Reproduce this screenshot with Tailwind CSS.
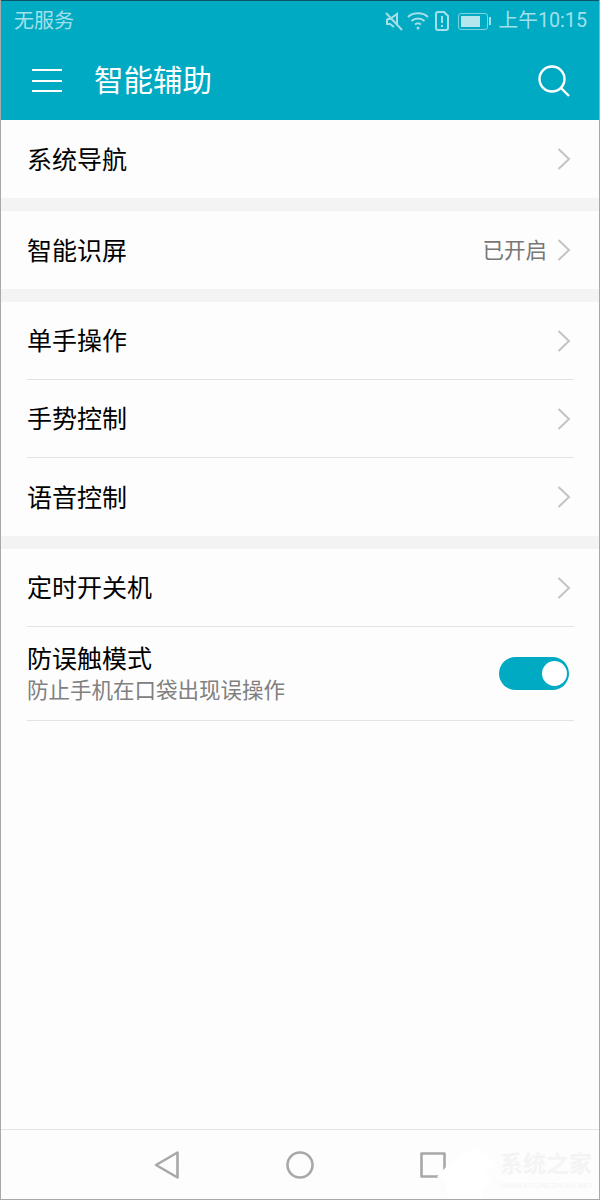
<!DOCTYPE html>
<html lang="zh">
  <head>
    <meta charset="UTF-8" />
    <title>智能辅助</title>
    <script src="https://cdn.jsdelivr.net/npm/@tailwindcss/browser@4"></script>
  </head>
  <body class="bg-[#fdfdfd]">
    <div class="relative flex flex-col w-[600px] h-[1200px] bg-[#fdfdfd] border-x border-b border-[#a8a8a8] font-['Roboto','Noto_Sans_CJK_SC',sans-serif] overflow-hidden">
      <!-- header -->
      <div class="shrink-0 h-[120px] -mx-px bg-[#00aac3] border-t border-[#0b5566] text-white">
        <div class="flex items-center justify-between h-[40px] pl-[14px] pr-[13px] text-[#a3e0ea]">
          <div class="text-[20px] leading-none">无服务</div>
          <div class="flex items-center">
            <svg width="20" height="20" viewBox="0 0 20 20" fill="none" stroke="#a3e0ea" stroke-width="2" class="mr-[3px]">
              <path d="M2 2 L18 19" />
              <path d="M3 8 H6 L13 3 V14 M3 8 V13 H6 L10 16" />
            </svg>
            <svg width="22" height="18" viewBox="0 0 22 18" fill="none" stroke="#a3e0ea" stroke-width="2" class="mr-[6px]">
              <path d="M1 5 C6 0 16 0 21 5" />
              <path d="M4.5 9 C8 5.5 14 5.5 17.5 9" />
              <path d="M8 12.5 C9.8 11 12.2 11 14 12.5" />
              <circle cx="11" cy="16" r="1.5" fill="#a3e0ea" stroke="none" />
            </svg>
            <svg width="14" height="20" viewBox="0 0 14 20" fill="none" stroke="#a3e0ea" stroke-width="2" class="mr-[9px]">
              <path d="M3 1 H9 L13 5 V17 Q13 19 11 19 H3 Q1 19 1 17 V3 Q1 1 3 1 Z" />
              <path d="M7 5 V12 M7 14 V16" />
            </svg>
            <div class="w-[30px] h-[17px] rounded-[3px] border border-[#7fd3e0] mr-[1px] p-[2px]">
              <div class="w-[19px] h-full bg-[#b5e6ed]"></div>
            </div>
            <div class="w-[2px] h-[8px] bg-[#a3e0ea] mr-[8px]"></div>
            <div class="text-[19.7px] leading-none whitespace-nowrap">上午10:15</div>
          </div>
        </div>
        <div class="flex items-center h-[79px] pl-[32px] pr-[30px]">
          <div class="flex flex-col justify-between w-[30px] h-[23px]">
            <div class="h-[2px] bg-white"></div>
            <div class="h-[2px] bg-white"></div>
            <div class="h-[2px] bg-white"></div>
          </div>
          <div class="ml-[32px] mt-[2px] text-[29.5px] leading-none">智能辅助</div>
          <svg width="32" height="32" viewBox="0 0 32 32" fill="none" stroke="white" stroke-width="2.4" class="ml-auto">
            <circle cx="14" cy="14" r="12.5" />
            <path d="M23 23 L31 31" />
          </svg>
        </div>
      </div>

      <!-- 系统导航 -->
      <div class="flex items-center justify-between h-[78px] pl-[26px] pr-[28px]">
        <div class="pt-[2px] text-[25px] leading-none text-black">系统导航</div>
        <svg width="14" height="24" viewBox="0 0 14 24" fill="none" stroke="#c4c4c4" stroke-width="2"><path d="M1.5 2 L12 12 L1.5 22" /></svg>
      </div>
      <div class="h-[13px] bg-[#f3f3f3]"></div>

      <!-- 智能识屏 -->
      <div class="flex items-center h-[78px] pl-[26px] pr-[28px]">
        <div class="pt-[2px] text-[25px] leading-none text-black">智能识屏</div>
        <div class="ml-auto mr-[10px] pt-[2px] text-[21.5px] leading-none text-[#777777]">已开启</div>
        <svg width="14" height="24" viewBox="0 0 14 24" fill="none" stroke="#c4c4c4" stroke-width="2"><path d="M1.5 2 L12 12 L1.5 22" /></svg>
      </div>
      <div class="h-[13px] bg-[#f3f3f3]"></div>

      <!-- 单手操作 group -->
      <div class="flex items-center justify-between h-[78px] ml-[26px] mr-[25px] pr-[3px] border-b border-[#e3e3e3]">
        <div class="pt-[2px] text-[25px] leading-none text-black">单手操作</div>
        <svg width="14" height="24" viewBox="0 0 14 24" fill="none" stroke="#c4c4c4" stroke-width="2"><path d="M1.5 2 L12 12 L1.5 22" /></svg>
      </div>
      <div class="flex items-center justify-between h-[78px] ml-[26px] mr-[25px] pr-[3px] border-b border-[#e3e3e3]">
        <div class="pt-[2px] text-[25px] leading-none text-black">手势控制</div>
        <svg width="14" height="24" viewBox="0 0 14 24" fill="none" stroke="#c4c4c4" stroke-width="2"><path d="M1.5 2 L12 12 L1.5 22" /></svg>
      </div>
      <div class="flex items-center justify-between h-[78px] pl-[26px] pr-[28px]">
        <div class="pt-[2px] text-[25px] leading-none text-black">语音控制</div>
        <svg width="14" height="24" viewBox="0 0 14 24" fill="none" stroke="#c4c4c4" stroke-width="2"><path d="M1.5 2 L12 12 L1.5 22" /></svg>
      </div>
      <div class="h-[13px] bg-[#f3f3f3]"></div>

      <!-- 定时开关机 group -->
      <div class="flex items-center justify-between h-[78px] ml-[26px] mr-[25px] pr-[3px] border-b border-[#e3e3e3]">
        <div class="pt-[2px] text-[25px] leading-none text-black">定时开关机</div>
        <svg width="14" height="24" viewBox="0 0 14 24" fill="none" stroke="#c4c4c4" stroke-width="2"><path d="M1.5 2 L12 12 L1.5 22" /></svg>
      </div>
      <div class="flex items-center justify-between h-[94px] ml-[26px] mr-[25px] border-b border-[#e3e3e3]">
        <div class="pt-[2px]">
          <div class="text-[25px] leading-none text-black">防误触模式</div>
          <div class="mt-[8px] text-[21.5px] leading-none text-[#808080]">防止手机在口袋出现误操作</div>
        </div>
        <div class="flex items-center justify-end w-[70px] h-[33px] mr-[5px] rounded-full bg-[#00aac3] pr-[2px]">
          <div class="w-[25px] h-[25px] rounded-full bg-white"></div>
        </div>
      </div>

      <!-- bottom nav -->
      <div class="mt-auto flex items-center h-[70px] border-t border-[#e3e3e3]">
        <svg width="26" height="30" viewBox="0 0 26 30" fill="none" stroke="#a8a8a8" stroke-width="2.6" stroke-linejoin="round" class="ml-[153px]">
          <path d="M2 15 L23.5 2.5 V27.5 Z" />
        </svg>
        <svg width="28" height="28" viewBox="0 0 28 28" fill="none" stroke="#a8a8a8" stroke-width="2.6" class="ml-[106px]">
          <circle cx="14" cy="14" r="12.5" />
        </svg>
        <svg width="26" height="26" viewBox="0 0 26 26" fill="none" stroke="#a8a8a8" stroke-width="2.6" stroke-linejoin="round" class="ml-[106px]">
          <rect x="1.5" y="1.5" width="23" height="23" />
        </svg>
      </div>

      <!-- watermark -->
      <svg width="66" height="56" viewBox="0 0 66 56" fill="#ffffff" class="absolute left-[431px] top-[1143px]">
        <path d="M5 34 L14 24 L44 2 L66 22 L52 30 L60 38 L50 48 L50 56 L16 56 L14 40 Z" />
      </svg>
      <div class="absolute left-[499px] top-[1153px] text-[#f4f4f4]">
        <div class="text-[23px] leading-none font-bold whitespace-nowrap">系统之家</div>
        <div class="mt-[6px] text-[8px] leading-none whitespace-nowrap">WWW.XITONGZHIJIA.NET</div>
      </div>
    </div>
  </body>
</html>
